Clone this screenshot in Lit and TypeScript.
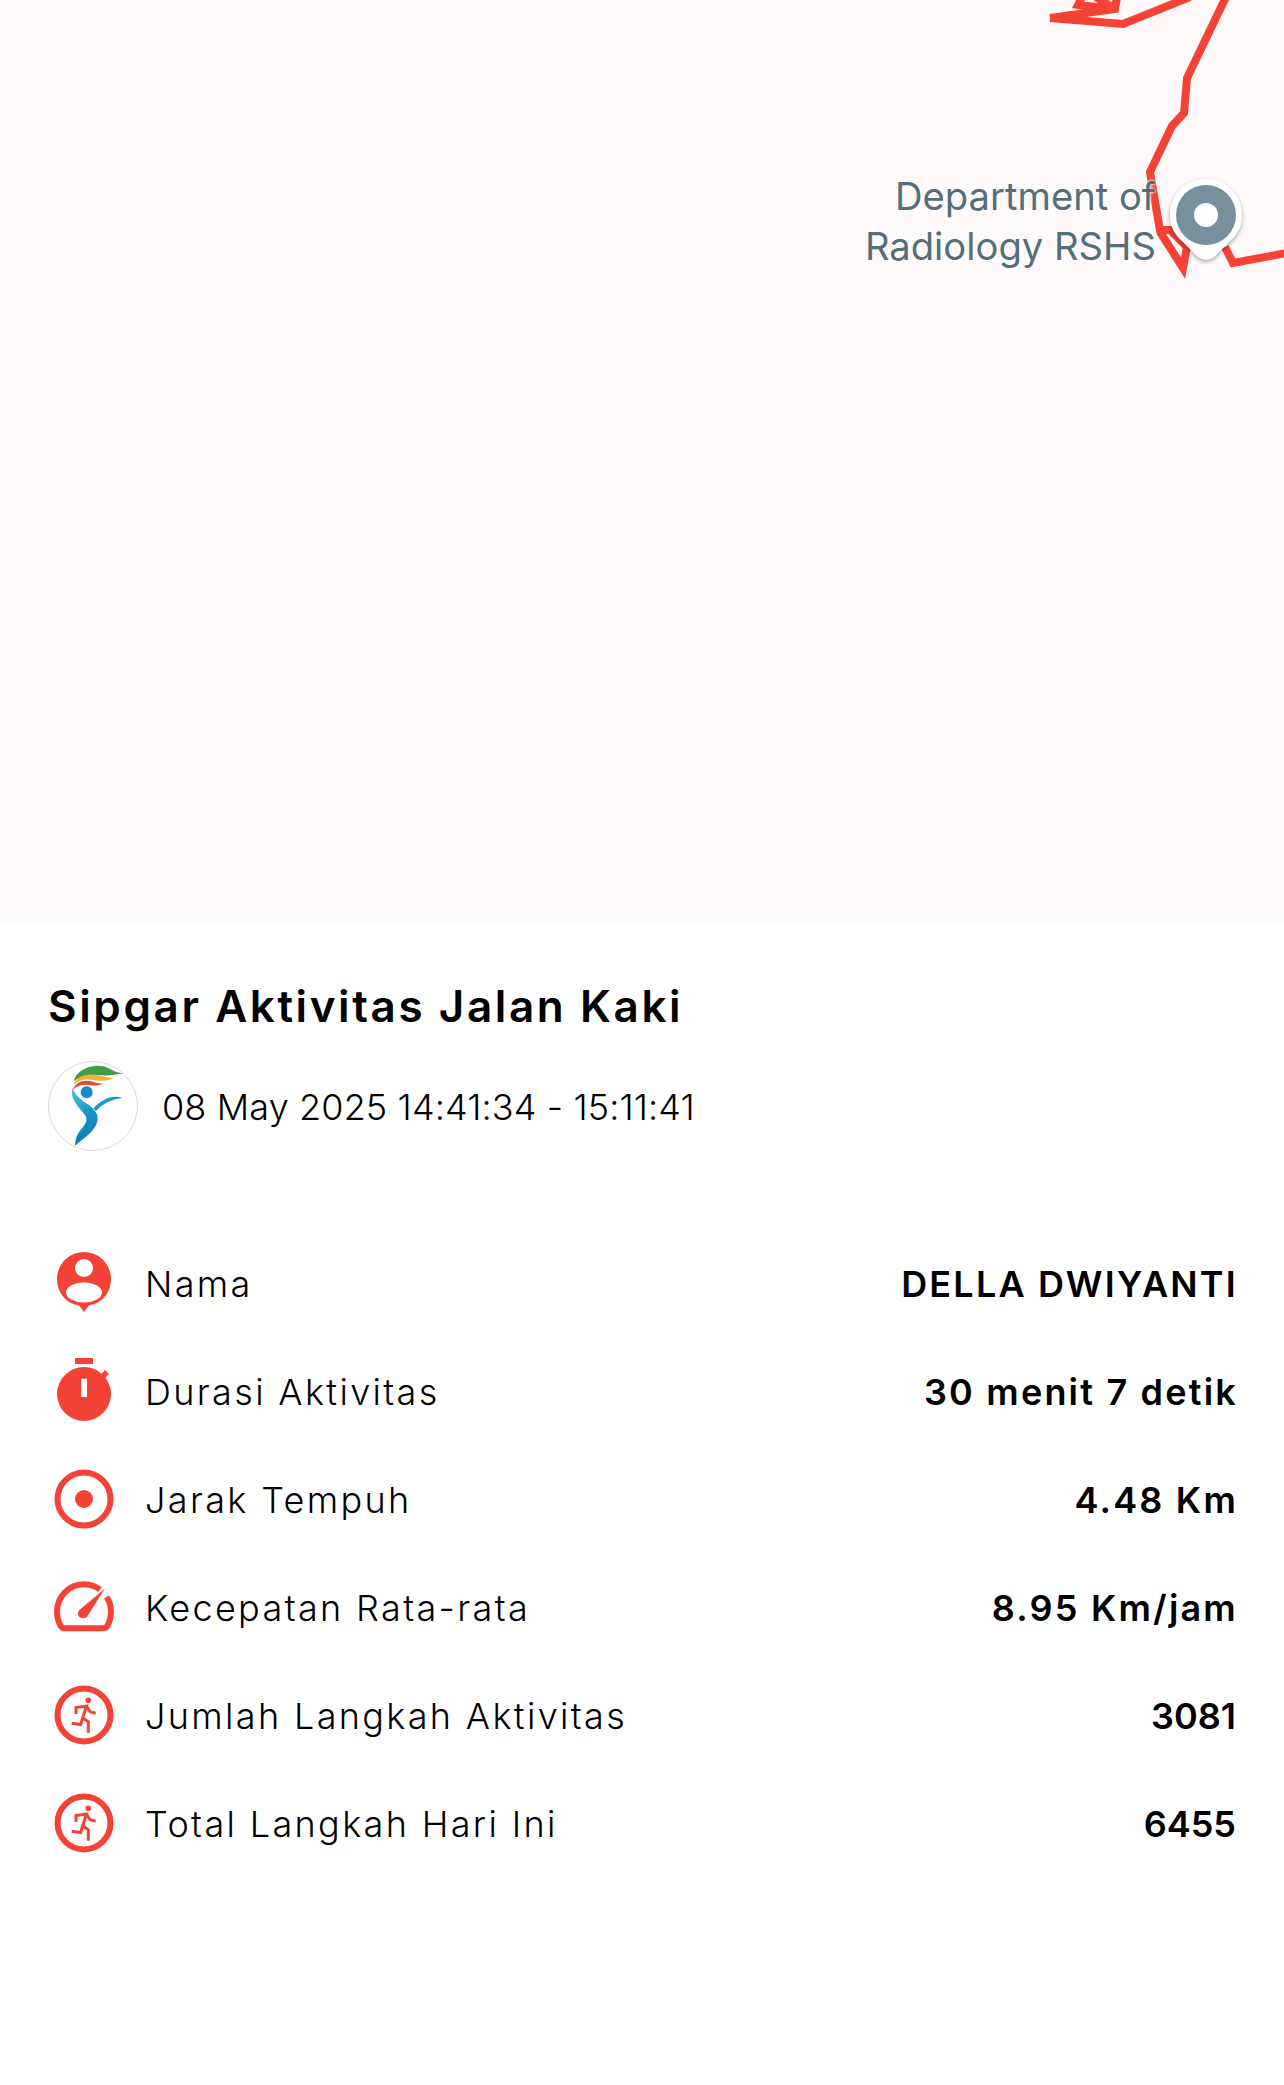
import { LitElement, css, html, svg } from "lit";
import { customElement } from "lit/decorators.js";
import { classMap } from "lit/directives/class-map.js";

const runner = svg`
  <circle cx="30" cy="29" r="26.5" fill="none" stroke="#f44336" stroke-width="6"/>
  <circle cx="34.3" cy="14.2" r="2.8" fill="#f44336"/>
  <path d="M22 28V21.500L32.500 20L27.700 35L26.700 38.500L17.700 37.300M29 32L34.300 35.700V46.700M32.500 20L36 25.700L41.700 27.300" fill="none" stroke="#f44336" stroke-width="3"/>
`;

const icons = {
  person: svg`
    <path d="M30 58L25 51.500C11 49 3 38 3 25C3 10 15 -2 30 -2S57 10 57 25C57 38 49 49 35 51.500Z" fill="#f44336"/>
    <circle cx="30" cy="14" r="9" fill="#fff"/>
    <ellipse cx="30" cy="38.500" rx="18" ry="10" fill="#fff"/>
  `,
  timer: svg`
    <rect x="21" y="-4" width="18" height="6" fill="#f44336"/>
    <path d="M47 12.500L51 8L55 12L50.500 16.500Z" fill="#f44336"/>
    <circle cx="30" cy="32" r="27" fill="#f44336"/>
    <rect x="27.200" y="16.700" width="5.800" height="18.300" fill="#fff"/>
  `,
  target: svg`
    <circle cx="30" cy="29" r="26.500" fill="none" stroke="#f44336" stroke-width="6"/>
    <circle cx="30" cy="29" r="9" fill="#f44336"/>
  `,
  gauge: svg`
    <g transform="translate(0 3)">
      <path d="M46 8.500C41 5 36 3.300 30 3.300C15 3.300 3 15.500 3 30.500C3 37 4.500 41 6.800 45.200C7.800 46.800 9 47.300 11 47.300H49C51 47.300 52.200 46.800 53.200 45.200C55.500 41 57 37 57 30.500C57 25 55.300 20 52.500 15.800" fill="none" stroke="#f44336" stroke-width="6"/>
      <path d="M51 7.500L33.500 35C31.500 37.700 28 38 25.500 36C23.300 33.800 23.500 30.300 26 28.400Z" fill="#f44336"/>
    </g>
  `,
  run: runner,
};

type IconName = keyof typeof icons;

const rows: { icon: IconName; label: string; value: string }[] = [
  { icon: "person", label: "Nama", value: "DELLA DWIYANTI" },
  { icon: "timer", label: "Durasi Aktivitas", value: "30 menit 7 detik" },
  { icon: "target", label: "Jarak Tempuh", value: "4.48 Km" },
  { icon: "gauge", label: "Kecepatan Rata-rata", value: "8.95 Km/jam" },
  { icon: "run", label: "Jumlah Langkah Aktivitas", value: "3081" },
  { icon: "run", label: "Total Langkah Hari Ini", value: "6455" },
];

@customElement("app-root")
export class AppRoot extends LitElement {
  static styles = css`
    :host {
      display: block;
      width: 1284px;
      height: 2085px;
      background: #fff;
      font-family: Inter, "Liberation Sans", sans-serif;
      color: #000;
      overflow: hidden;
    }
    .map {
      position: relative;
      height: 925px;
      background: #fff9f9;
      overflow: hidden;
    }
    .route {
      position: absolute;
      inset: 0;
    }
    .place {
      position: absolute;
      top: 171px;
      right: 128px;
      text-align: right;
      font-size: 38.2px;
      line-height: 50px;
      color: #546e7a;
      text-shadow: 0 0 3px #fff, 0 0 3px #fff;
    }
    .sheet {
      padding: 52px 48px 0;
    }
    h1 {
      margin: 0;
      font-size: 44px;
      line-height: 58px;
      font-weight: 600;
      letter-spacing: 2.6px;
    }
    .meta {
      display: flex;
      align-items: center;
      gap: 24px;
      margin-top: 26px;
    }
    .logo {
      width: 90px;
      height: 90px;
      flex: none;
    }
    .date {
      font-size: 36px;
      font-weight: 300;
      letter-spacing: 0.13px;
      padding-top: 2px;
    }
    .rows {
      display: flex;
      flex-direction: column;
      margin-top: 79px;
    }
    .row {
      display: flex;
      align-items: center;
      height: 108px;
    }
    .row svg {
      width: 60px;
      height: 60px;
      margin-left: 6px;
      flex: none;
      overflow: visible;
    }
    .label {
      margin-left: 31px;
      font-size: 36px;
      font-weight: 300;
      letter-spacing: 2.35px;
      flex: 1;
    }
    .value {
      font-size: 36px;
      font-weight: 600;
      letter-spacing: 2.2px;
      margin-right: -2px;
    }
    .value.count {
      letter-spacing: 0;
      margin-right: 0;
    }
  `;

  render() {
    return html`
      <div class="map">
        <svg class="route" width="1284" height="925" viewBox="0 0 1284 925">
          <defs>
            <filter id="pin-shadow" x="-30%" y="-30%" width="160%" height="160%">
              <feDropShadow dx="0" dy="2" stdDeviation="2" flood-color="#000" flood-opacity="0.35"/>
            </filter>
          </defs>
          <g fill="none" stroke="#f44336" stroke-width="8" stroke-linejoin="miter">
            <path d="M1050 18L1123 24L1190 -3"/>
            <path d="M1050 18L1115 9L1117 -3M1115 9L1096 -3M1115 9L1078 5L1082 -3"/>
            <path d="M1226 -3L1187 78L1184 113L1172 126L1150 172L1157 213L1160 230H1170L1187 247L1183 268L1160 232"/>
            <path d="M1225 247L1233 263L1287 253"/>
          </g>
          <path filter="url(#pin-shadow)" d="M1206 179C1226 179 1242 195 1242 215C1242 226 1238 234 1229 242L1216 255C1210 261 1202 261 1196 255L1183 242C1174 234 1170 226 1170 215C1170 195 1186 179 1206 179Z" fill="#fff"/>
          <circle cx="1206" cy="215" r="30" fill="#78909c"/>
          <circle cx="1206" cy="215" r="12" fill="#fff"/>
        </svg>
        <div class="place">Department of<br />Radiology RSHS</div>
      </div>
      <div class="sheet">
        <h1>Sipgar Aktivitas Jalan Kaki</h1>
        <div class="meta">
          <svg class="logo" viewBox="0 0 90 90">
            <defs>
              <linearGradient id="body" x1="0" y1="0" x2="0.5" y2="1">
                <stop offset="0" stop-color="#4dc4da"/>
                <stop offset="0.5" stop-color="#1593c9"/>
                <stop offset="1" stop-color="#0f6fae"/>
              </linearGradient>
            </defs>
            <circle cx="45" cy="45" r="44.500" fill="#fff" stroke="#d8d8d8"/>
            <path d="M26 20C28 8 48 1 60 7C66 10 70 12 75 12.500C66 14 60 15 50 14C42 13.500 32 15 26 20Z" fill="#3f9f46"/>
            <path d="M25.500 24C28 14 42 12 52 14.500C57 16 61 17 66 17C60 20 52 20.500 46 19C38 17.500 30 19 25.500 24Z" fill="#f2b233"/>
            <path d="M25 29C27 21 36 18 44 20.500C48 22 51 22.500 55 22.500C50 25 45 25 40 24C34 23 28 25 25 29Z" fill="#e04a3a"/>
            <circle cx="38.700" cy="31.300" r="6" fill="#1d8ac4"/>
            <path d="M24.500 27C21 38 32 47 37 54C41 60 36 65 31 71C28 76 27 80 27 85C34 78 47 71 49.500 60C50.500 54 48 51 45 48C52 40 62 33 75 37C64 38 55 42 48 50L41 44C35 40 28 36 24.500 27Z" fill="url(#body)"/>
          </svg>
          <div class="date">08 May 2025 14:41:34 - 15:11:41</div>
        </div>
        <div class="rows">
          ${rows.map(
            (r) => html`
              <div class="row">
                <svg viewBox="0 0 60 60">${icons[r.icon]}</svg>
                <div class="label">${r.label}</div>
                <div class=${classMap({ value: true, count: /^\d+$/.test(r.value) })}>${r.value}</div>
              </div>
            `
          )}
        </div>
      </div>
    `;
  }
}
